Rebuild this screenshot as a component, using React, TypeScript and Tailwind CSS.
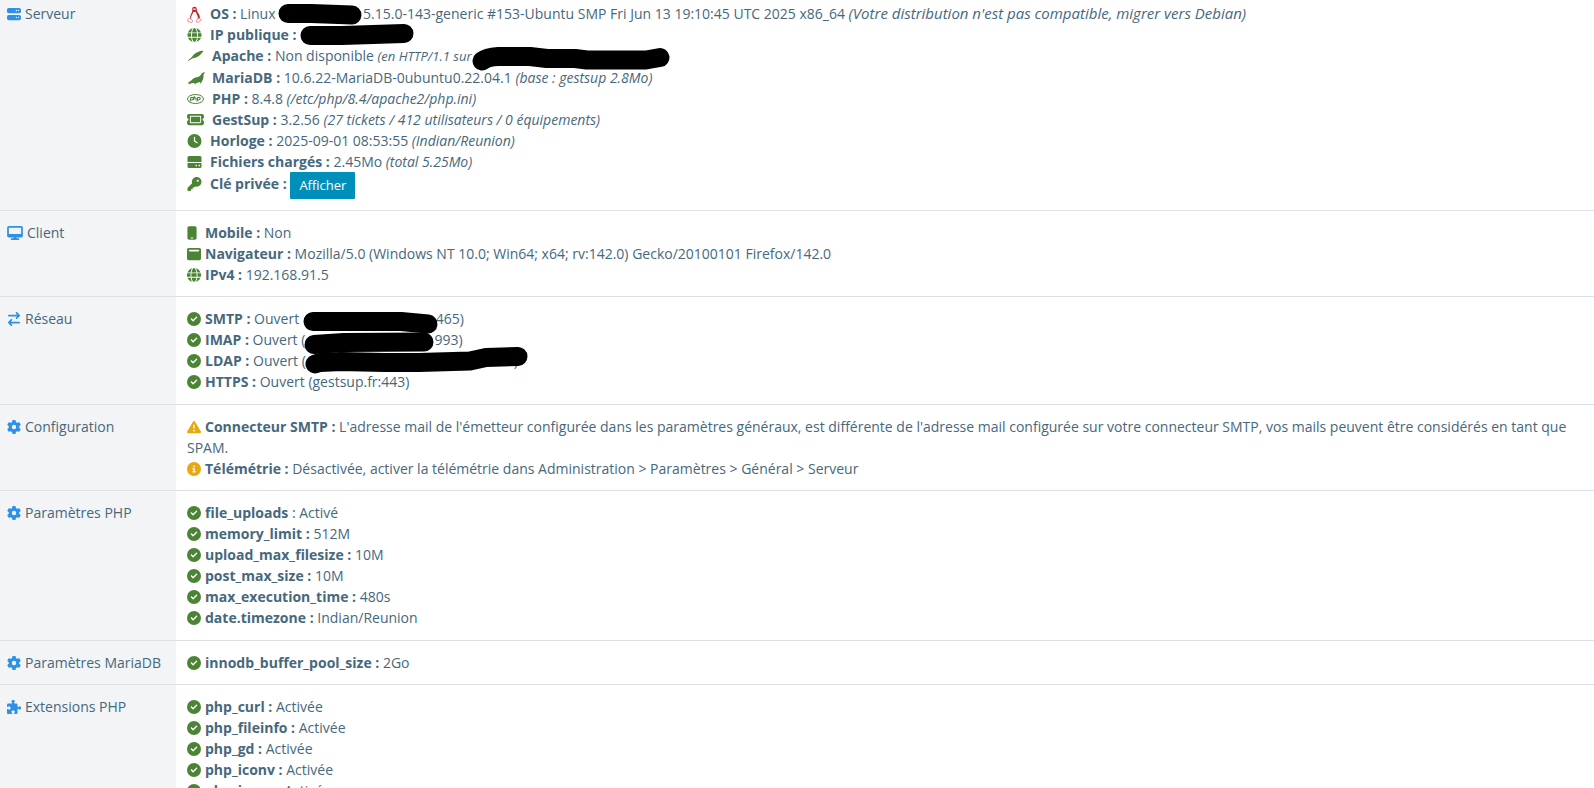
import type { ReactNode } from 'react';
import {
  FaArrowRightArrowLeft,
  FaCircleCheck,
  FaCircleInfo,
  FaClock,
  FaDesktop,
  FaGear,
  FaGlobe,
  FaKey,
  FaMobile,
  FaPuzzlePiece,
  FaServer,
  FaTicket,
  FaTriangleExclamation,
  FaWindowMaximize,
} from 'react-icons/fa6';

const labelIcon = 'mr-1 inline-block h-[14px] w-[14px] align-[-2px] text-[#2e91e8]';
const wideIcon = 'mr-2 inline-block h-[14px] w-[15px] align-[-2px] text-[#4c8435]';
const widerIcon = 'mr-2 inline-block h-[15px] w-[17px] align-[-2px] text-[#4c8435]';
const okIcon = 'mr-1 inline-block h-[14px] w-[14px] align-[-2px] text-[#4c8435]';
const warnIcon = 'mr-1 inline-block h-[14px] w-[14px] align-[-2px] text-[#e9a90c]';

const phpSettings = [
  { name: 'memory_limit', value: '512M' },
  { name: 'upload_max_filesize', value: '10M' },
  { name: 'post_max_size', value: '10M' },
  { name: 'max_execution_time', value: '480s' },
  { name: 'date.timezone', value: 'Indian/Reunion' },
];

const phpExtensions = ['php_curl', 'php_fileinfo', 'php_gd', 'php_iconv', 'php_imap'];

function TuxIcon() {
  return (
    <svg viewBox="0 0 16 18" className="mr-2 inline-block h-[17px] w-[15px] align-[-4px]" fill="none" aria-hidden="true">
      <path
        d="M5.6 4.5C5.300 1.500 6.300.6 8 .6s2.700.9 2.500 3.900c.2 2.200 3.500 4.500 3.200 8l-1.500 1.200L8 15.500l-4.500-2.300c-.8-3 2.200-6 2.100-8.700z"
        fill="#cf2229"
      />
      <path d="M6.600 6.200h2.900c.4 2.100 2.100 3.800 2.100 6.300 0 2.300-1.600 3.500-3.600 3.500s-3.600-1.200-3.600-3.500c0-2.500 1.900-4.200 2.200-6.300z" fill="#fff" />
      <path d="M6.800 2.400h2.400v1.800H6.800z" fill="#f3c6c8" />
      <path d="M3 12.900l-2.300 1.300.4 2.500 4.100.8 1.200-1.400zM12.600 12.900l2.700 1.600-3 2.700h-2l-.4-2z" fill="#fff" stroke="#dd5a5f" strokeWidth="0.700" />
    </svg>
  );
}

function FeatherIcon() {
  return (
    <svg viewBox="0 0 17 15" className={widerIcon} fill="currentColor" aria-hidden="true">
      <path d="M16.500 2.800c-4.500-.1-9 2.200-11.500 6.200L.9 12.400l.4.5 4.400-2.600c4.500-.3 8.500-3.400 10.800-7.500z" />
    </svg>
  );
}

function SealIcon() {
  return (
    <svg viewBox="0 0 17 15" className={`overflow-visible ${widerIcon}`} fill="currentColor" aria-hidden="true">
      <path d="M18 2.300c-1.200-.1-2.200.2-3 1-1.400 1.800-2.200 3.300-4.300 3.700C7.500 7.400 5.600 9 4 10.800l-3 1.600.9.500-.6 1.500 3.200-1.200 3.200-.4-.4 1.600 2.900-1.700 3-.7.400 2.200 1.500-3.200c1.400-1.700 1.400-3.600 1.400-6.200z" />
    </svg>
  );
}

function PhpIcon() {
  return (
    <svg viewBox="0 0 17 15" className={widerIcon} fill="none" stroke="currentColor" aria-hidden="true">
      <ellipse cx="8.500" cy="8" rx="8" ry="4.500" strokeWidth="1" />
      <path d="M3 10.500l.9-4h1.600q1.200.2.700 1.400T4.600 9h-1M7.400 5.200l-.9 4M7.100 6.700h1.200q.9.100.7.900l-.3 1.600M9.900 10.500l.9-4h1.600q1.200.2.700 1.400T11.500 9h-1" strokeWidth="1.100" />
    </svg>
  );
}

function DiskIcon() {
  return (
    <svg viewBox="0 0 15 14" className={wideIcon} fill="currentColor" aria-hidden="true">
      <path d="M2 1h11q1.500 0 1.500 1.500V7H.5V2.500Q.5 1 2 1z" />
      <path
        fillRule="evenodd"
        d="M.5 8h14v3.500Q14.500 13 13 13H2Q.5 13 .5 11.500zM8.600 9.800v1.400H10V9.800zM11.600 9.800v1.400H13V9.800z"
      />
    </svg>
  );
}

// black marker stroke that hides a host name or an address
function Mask({ className, d }: { className: string; d: string }) {
  return (
    <svg className={`relative inline-block h-[21px] overflow-visible align-top ${className}`} fill="none" stroke="#000" strokeWidth="19" strokeLinecap="round" strokeLinejoin="round" aria-hidden="true">
      <path d={d} />
    </svg>
  );
}

function Section({ icon, title, children }: { icon: ReactNode; title: string; children: ReactNode }) {
  return (
    <tr className="group border-b border-[#dee1e4]">
      <th scope="row" className="w-[176px] whitespace-nowrap bg-[#f2f4f6] pl-[7px] pt-[11px] text-left align-top font-normal group-first:pt-[3px]">
        {icon}
        {title}
      </th>
      <td className="px-[11px] pb-[11px] pt-[11px] align-top group-odd:pb-3 group-first:pb-[11px]! group-first:pt-[3px]">{children}</td>
    </tr>
  );
}

export default function App() {
  return (
    <div className="h-screen overflow-hidden bg-white font-['Open_Sans',sans-serif] text-[14px] leading-[21px] text-[#46687d]">
      <table className="w-full border-collapse">
        <tbody>
          <Section icon={<FaServer className={labelIcon} />} title="Serveur">
            <div>
              <TuxIcon />
              <b>OS :</b> Linux <Mask className="w-[84px]" d="M9 10.500H32L73 12" />
              5.15.0-143-generic #153-Ubuntu SMP Fri Jun 13 19:10:45 UTC 2025 x86_64{' '}
              <i className="text-[15px] leading-none">(Votre distribution n'est pas compatible, migrer vers Debian)</i>
            </div>
            <div>
              <FaGlobe className={wideIcon} />
              <b>IP publique :</b> <Mask className="w-[114px]" d="M10 11.500H42L104 9.500" />
            </div>
            <div>
              <FeatherIcon />
              <b>Apache :</b> Non disponible <i className="text-[13px] leading-none">(en HTTP/1.1 sur</i>
              <Mask className="w-[198px]" d="M10 16Q15 12 26 11.500H58L75 13.500H103L115 15H174L188 12.500" />
            </div>
            <div className="pt-px">
              <SealIcon />
              <b>MariaDB :</b> 10.6.22-MariaDB-0ubuntu0.22.04.1 <i>(base : gestsup 2.8Mo)</i>
            </div>
            <div>
              <PhpIcon />
              <b>PHP :</b> 8.4.8 <i>(/etc/php/8.4/apache2/php.ini)</i>
            </div>
            <div>
              <FaTicket className={widerIcon} />
              <b>GestSup :</b> 3.2.56 <i>(27 tickets / 412 utilisateurs / 0 équipements)</i>
            </div>
            <div>
              <FaClock className={wideIcon} />
              <b>Horloge :</b> 2025-09-01 08:53:55 <i>(Indian/Reunion)</i>
            </div>
            <div>
              <DiskIcon />
              <b>Fichiers chargés :</b> 2.45Mo <i>(total 5.25Mo)</i>
            </div>
            <div>
              <FaKey className={wideIcon} />
              <b>Clé privée :</b>{' '}
              <button type="button" className="h-[27px] rounded-[1px] bg-[#008fb8] px-[9px] align-middle text-[13px] leading-[19px] text-white">
                Afficher
              </button>
            </div>
          </Section>

          <Section icon={<FaDesktop className="mr-1 inline-block h-[14px] w-[16px] align-[-2px] text-[#2e91e8]" />} title="Client">
            <div>
              <FaMobile className="mr-2 inline-block h-[14px] w-[10px] align-[-2px] text-[#4c8435]" />
              <b>Mobile :</b> Non
            </div>
            <div>
              <FaWindowMaximize className={okIcon} />
              <b>Navigateur :</b> Mozilla/5.0 (Windows NT 10.0; Win64; x64; rv:142.0) Gecko/20100101 Firefox/142.0
            </div>
            <div>
              <FaGlobe className={okIcon} />
              <b>IPv4 :</b> 192.168.91.5
            </div>
          </Section>

          <Section icon={<FaArrowRightArrowLeft className={labelIcon} />} title="Réseau">
            <div>
              <FaCircleCheck className={okIcon} />
              <b>SMTP :</b> Ouvert <Mask className="w-[133px]" d="M10 13.500H98L125 16" />
              465)
            </div>
            <div>
              <FaCircleCheck className={okIcon} />
              <b>IMAP :</b> Ouvert (<Mask className="w-[129px]" d="M9 15.500L39 13.500L119 13" />
              993)
            </div>
            <div>
              <FaCircleCheck className={okIcon} />
              <b>LDAP :</b> Ouvert (<Mask className="w-[208px]" d="M9 14L14 12.500L35 11.500L79 12.500H113L164 11L180 7.500L212 6.500" />)
            </div>
            <div>
              <FaCircleCheck className={okIcon} />
              <b>HTTPS :</b> Ouvert (gestsup.fr:443)
            </div>
          </Section>

          <Section icon={<FaGear className={labelIcon} />} title="Configuration">
            <div>
              <FaTriangleExclamation className={warnIcon} />
              <b>Connecteur SMTP :</b> L'adresse mail de l'émetteur configurée dans les paramètres généraux, est différente de l'adresse mail
              configurée sur votre connecteur SMTP, vos mails peuvent être considérés en tant que SPAM.
            </div>
            <div>
              <FaCircleInfo className={warnIcon} />
              <b>Télémétrie :</b> Désactivée, activer la télémétrie dans Administration &gt; Paramètres &gt; Général &gt; Serveur
            </div>
          </Section>

          <Section icon={<FaGear className={labelIcon} />} title="Paramètres PHP">
            <div>
              <FaCircleCheck className={okIcon} />
              <b>file_uploads</b> : Activé
            </div>
            {phpSettings.map((setting) => (
              <div key={setting.name}>
                <FaCircleCheck className={okIcon} />
                <b>{setting.name} :</b> {setting.value}
              </div>
            ))}
          </Section>

          <Section icon={<FaGear className={labelIcon} />} title="Paramètres MariaDB">
            <div>
              <FaCircleCheck className={okIcon} />
              <b>innodb_buffer_pool_size :</b> 2Go
            </div>
          </Section>

          <Section icon={<FaPuzzlePiece className={labelIcon} />} title="Extensions PHP">
            {phpExtensions.map((extension) => (
              <div key={extension}>
                <FaCircleCheck className={okIcon} />
                <b>{extension} :</b> Activée
              </div>
            ))}
          </Section>
        </tbody>
      </table>
    </div>
  );
}
